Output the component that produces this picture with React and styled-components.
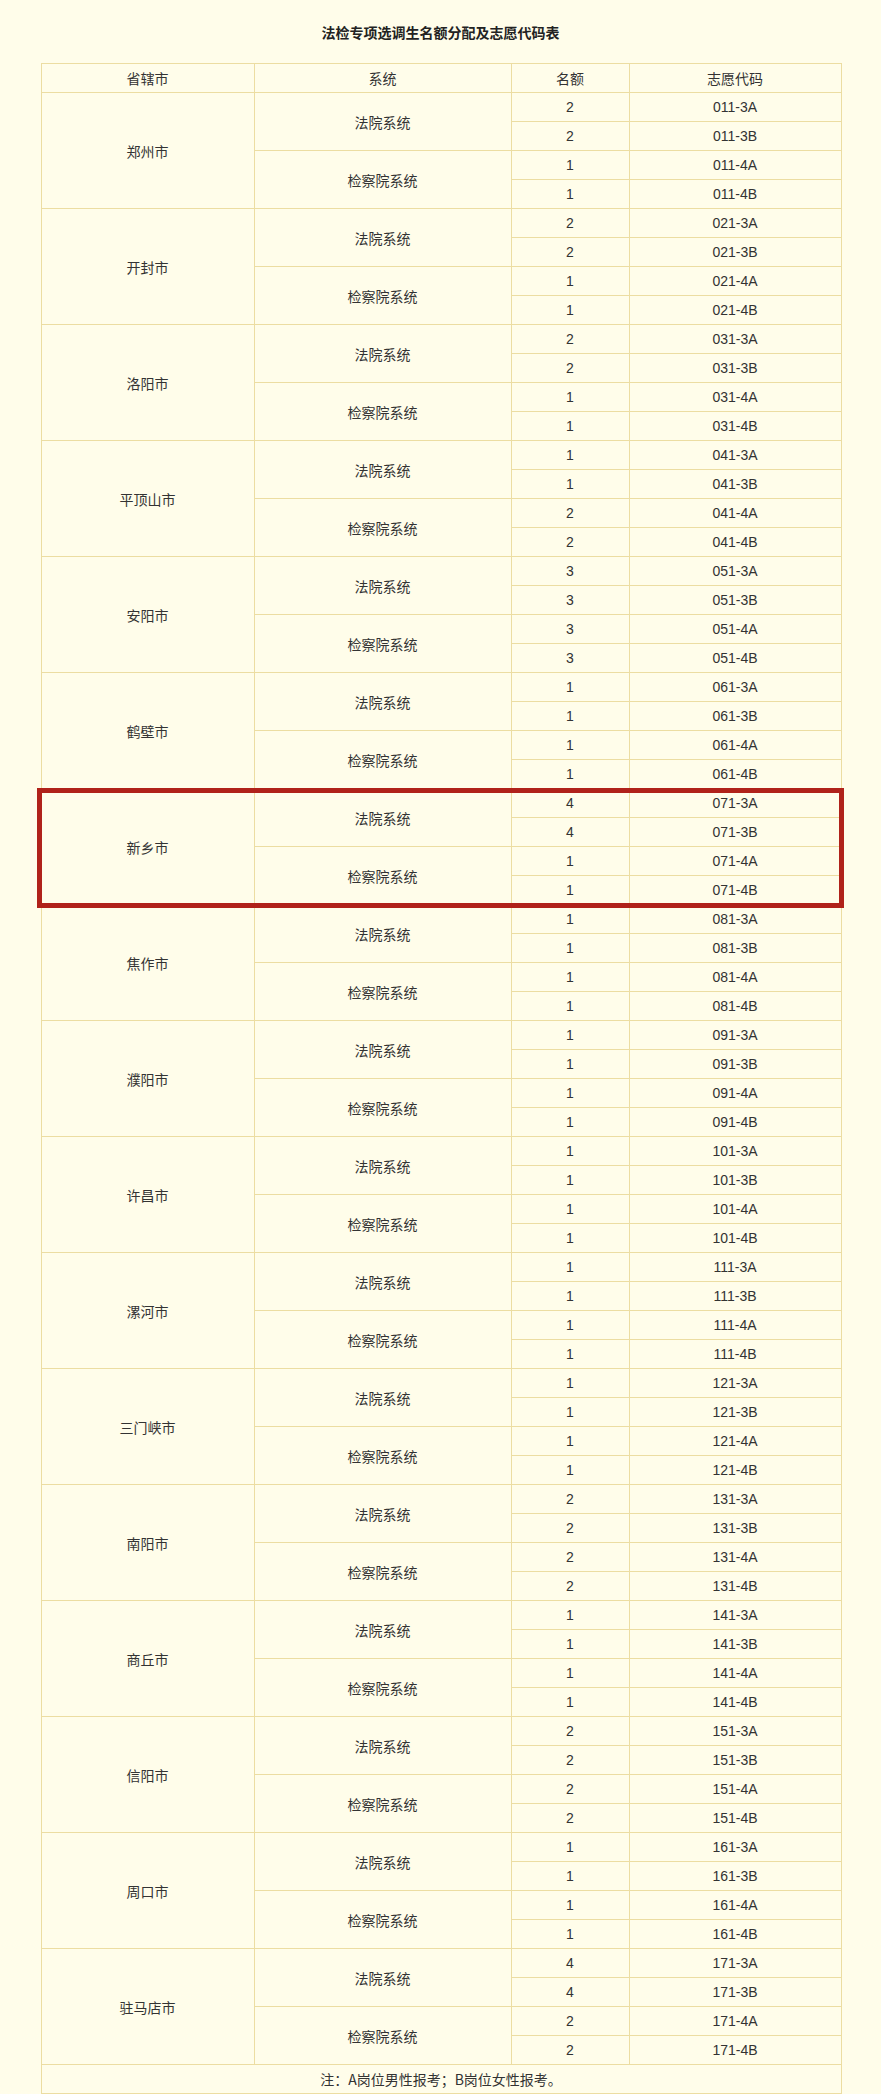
import React from "react";
import styled, { createGlobalStyle } from "styled-components";

const GlobalStyle = createGlobalStyle`
  html, body {
    margin: 0;
    padding: 0;
    background: #fffdea;
  }
  body {
    font-family: "Liberation Sans", "Noto Sans CJK SC", sans-serif;
    color: #333;
  }
`;

const Page = styled.div`
  width: 881px;
  min-height: 2094px;
  background: #fffdea;
  padding-top: 22px;
  box-sizing: border-box;
`;

const Title = styled.h1`
  margin: 0 0 21px;
  height: 20px;
  line-height: 20px;
  font-size: 14px;
  font-weight: bold;
  color: #222;
  text-align: center;
  font-family: "Noto Sans CJK SC", sans-serif;
`;

const TableWrap = styled.div`
  position: relative;
  width: 800px;
  margin: 0 auto;
`;

const Table = styled.table`
  width: 800px;
  border-collapse: collapse;
  table-layout: fixed;
  font-size: 14px;
`;

const Cell = styled.td`
  height: 28px;
  padding: 0;
  border: 1px solid #ecdda2;
  text-align: center;
  vertical-align: middle;
  line-height: 18px;
  color: #333;
  font-family: ${(p) =>
    p.$num
      ? `"Liberation Sans", "Noto Sans CJK SC", sans-serif`
      : `"Noto Sans CJK SC", sans-serif`};
`;

const HeadCell = styled(Cell).attrs({ as: "th" })`
  font-weight: normal;
`;

const Highlight = styled.div`
  position: absolute;
  left: -4px;
  width: 807px;
  height: 120px;
  border: 5px solid #b0221a;
  box-sizing: border-box;
  pointer-events: none;
`;

const cities = [
  ["郑州市", [2, 2, 1, 1]],
  ["开封市", [2, 2, 1, 1]],
  ["洛阳市", [2, 2, 1, 1]],
  ["平顶山市", [1, 1, 2, 2]],
  ["安阳市", [3, 3, 3, 3]],
  ["鹤壁市", [1, 1, 1, 1]],
  ["新乡市", [4, 4, 1, 1]],
  ["焦作市", [1, 1, 1, 1]],
  ["濮阳市", [1, 1, 1, 1]],
  ["许昌市", [1, 1, 1, 1]],
  ["漯河市", [1, 1, 1, 1]],
  ["三门峡市", [1, 1, 1, 1]],
  ["南阳市", [2, 2, 2, 2]],
  ["商丘市", [1, 1, 1, 1]],
  ["信阳市", [2, 2, 2, 2]],
  ["周口市", [1, 1, 1, 1]],
  ["驻马店市", [4, 4, 2, 2]],
];

const suffixes = ["3A", "3B", "4A", "4B"];
const ROW_H = 29;
const highlightIndex = 6;

export default function App() {
  return (
    <Page>
      <GlobalStyle />
      <Title>法检专项选调生名额分配及志愿代码表</Title>
      <TableWrap>
        <Table>
          <colgroup>
            <col style={{ width: 213 }} />
            <col style={{ width: 257 }} />
            <col style={{ width: 118 }} />
            <col style={{ width: 212 }} />
          </colgroup>
          <thead>
            <tr>
              <HeadCell>省辖市</HeadCell>
              <HeadCell>系统</HeadCell>
              <HeadCell>名额</HeadCell>
              <HeadCell>志愿代码</HeadCell>
            </tr>
          </thead>
          <tbody>
            {cities.map(([name, counts], ci) => {
              const code = String(ci + 1).padStart(2, "0") + "1";
              return counts.map((n, ri) => (
                <tr key={`${ci}-${ri}`}>
                  {ri === 0 && <Cell rowSpan={4}>{name}</Cell>}
                  {ri === 0 && <Cell rowSpan={2}>法院系统</Cell>}
                  {ri === 2 && <Cell rowSpan={2}>检察院系统</Cell>}
                  <Cell $num>{n}</Cell>
                  <Cell $num>{`${code}-${suffixes[ri]}`}</Cell>
                </tr>
              ));
            })}
            <tr>
              <Cell colSpan={4}>注：A岗位男性报考；B岗位女性报考。</Cell>
            </tr>
          </tbody>
        </Table>
        <Highlight style={{ top: ROW_H * (1 + highlightIndex * 4) }} />
      </TableWrap>
    </Page>
  );
}
